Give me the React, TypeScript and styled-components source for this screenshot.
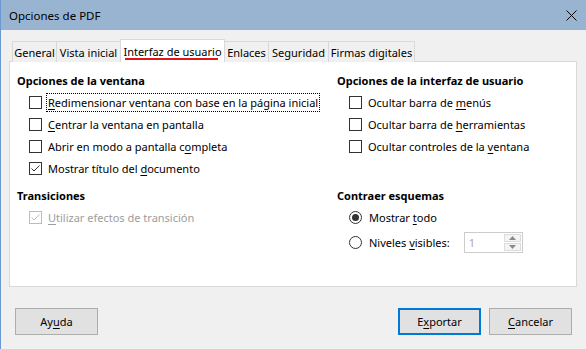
import React, { FC } from 'react';
import styled, { createGlobalStyle, css } from 'styled-components';

const GlobalStyle = createGlobalStyle`
  html, body {
    margin: 0;
    padding: 0;
    background: #f0f0f0;
  }
  body {
    font-family: 'Noto Sans', 'Open Sans', sans-serif;
    font-size: 11px;
    color: #000;
  }
`;

const Window = styled.div`
  width: 586px;
  height: 349px;
  box-sizing: border-box;
  border-left: 1px solid #6a98d2;
  background: #f0f0f0;
  display: flex;
  flex-direction: column;
`;

const TitleBar = styled.div`
  height: 30px;
  flex-shrink: 0;
  background: #99b4d1;
  display: flex;
  align-items: center;
  justify-content: space-between;
  padding: 0 9px 0 8px;
  font-size: 11.5px;
`;

const CloseIcon = styled.svg`
  width: 11px;
  height: 11px;
`;

const Body = styled.div`
  flex: 1;
  display: flex;
  flex-direction: column;
  padding: 9px 9px 0 8px;
`;

const TabStrip = styled.div`
  display: flex;
  align-items: flex-end;
  height: 23px;
  padding-left: 3px;
  margin-bottom: -1px;
  position: relative;
  z-index: 1;
`;

const Tab = styled.div<{ $w: number; $active?: boolean }>`
  width: ${p => p.$w}px;
  box-sizing: border-box;
  height: 21px;
  margin-right: -1px;
  border: 1px solid #d9d9d9;
  border-bottom: none;
  background: #f0f0f0;
  display: flex;
  align-items: center;
  justify-content: center;
  white-space: nowrap;
  position: relative;
  ${p =>
    p.$active &&
    css`
      height: 23px;
      background: #fff;
      z-index: 2;
      &::after {
        content: '';
        position: absolute;
        left: 4px;
        right: 6px;
        bottom: 2px;
        height: 2px;
        background: #e3141b;
      }
    `}
`;

const Panel = styled.div`
  height: 226px;
  box-sizing: border-box;
  border: 1px solid #d9d9d9;
  background: #fff;
  padding: 11px 0 0 7px;
`;

const Grid = styled.div`
  display: grid;
  grid-template-columns: 320px 1fr;
  row-gap: 9px;
`;

const Section = styled.div`
  display: flex;
  flex-direction: column;
`;

const Heading = styled.div`
  height: 16px;
  line-height: 16px;
  font-weight: bold;
  margin-bottom: 2px;
`;

const Row = styled.div<{ $gapTop?: number }>`
  height: 22px;
  display: flex;
  align-items: center;
  padding-left: 12px;
  margin-top: ${p => p.$gapTop || 0}px;
`;

const Box = styled.span<{ $disabled?: boolean }>`
  width: 13px;
  height: 13px;
  box-sizing: border-box;
  border: 1px solid ${p => (p.$disabled ? '#bcbcbc' : '#333')};
  background: #fff;
  flex-shrink: 0;
  display: flex;
  align-items: center;
  justify-content: center;
`;

const Round = styled.span<{ $on?: boolean }>`
  width: 13px;
  height: 13px;
  box-sizing: border-box;
  border: 1px solid #333;
  border-radius: 50%;
  background: #fff;
  flex-shrink: 0;
  display: flex;
  align-items: center;
  justify-content: center;

  &::after {
    content: '';
    width: 7px;
    height: 7px;
    border-radius: 50%;
    background: ${p => (p.$on ? '#333' : 'transparent')};
  }
`;

const Label = styled.span<{ $disabled?: boolean; $focus?: boolean; $gap?: number }>`
  margin-left: ${p => p.$gap ?? 6}px;
  line-height: 15px;
  white-space: nowrap;
  color: ${p => (p.$disabled ? '#9d9d9d' : '#000')};
  ${p =>
    p.$focus &&
    css`
      outline: 1px dotted #000;
      outline-offset: 1px;
    `}
`;

const U = styled.span`
  text-decoration: underline;
  text-underline-offset: 2px;
`;

const Spin = styled.div`
  margin-left: 14px;
  width: 59px;
  height: 21px;
  box-sizing: border-box;
  border: 1px solid #cccccc;
  background: #fff;
  display: flex;
`;

const SpinValue = styled.span`
  flex: 1;
  padding-left: 4px;
  line-height: 19px;
  color: #a8a8a8;
`;

const SpinButtons = styled.div`
  width: 17px;
  display: flex;
  flex-direction: column;
  padding: 1px 1px 1px 0;
  gap: 1px;
`;

const SpinButton = styled.div`
  flex: 1;
  border: 1px solid #dcdcdc;
  background: #f4f4f4;
  display: flex;
  align-items: center;
  justify-content: center;
`;

const Footer = styled.div`
  display: flex;
  align-items: center;
  padding: 21px 5px 0 6px;
`;

const Button = styled.div<{ $primary?: boolean }>`
  width: 83px;
  height: 27px;
  box-sizing: border-box;
  border: ${p => (p.$primary ? '2px solid #0078d7' : '1px solid #adadad')};
  background: #e1e1e1;
  display: flex;
  align-items: center;
  justify-content: center;
`;

const Spacer = styled.div`
  flex: 1;
`;

const ButtonGap = styled.div`
  width: 8px;
`;

const Check: FC<{ checked?: boolean; disabled?: boolean }> = ({ checked, disabled }) => (
  <Box $disabled={disabled}>
    {checked && (
      <svg width="11" height="11" viewBox="0 0 11 11">
        <polyline
          points="1.5,5.5 4,8 9.5,2.5"
          fill="none"
          stroke={disabled ? '#bcbcbc' : '#333'}
          strokeWidth="1"
        />
      </svg>
    )}
  </Box>
);

const tabs = [
  { label: 'General', w: 45 },
  { label: 'Vista inicial', w: 65 },
  { label: 'Interfaz de usuario', w: 105, active: true },
  { label: 'Enlaces', w: 45 },
  { label: 'Seguridad', w: 61 },
  { label: 'Firmas digitales', w: 87 },
];

const App: FC = () => (
  <>
    <GlobalStyle />
    <Window>
      <TitleBar>
        <span>Opciones de PDF</span>
        <CloseIcon viewBox="0 0 11 11">
          <path d="M0.5 0.5 L10.5 10.5 M10.5 0.5 L0.5 10.5" stroke="#000" strokeWidth="1" />
        </CloseIcon>
      </TitleBar>
      <Body>
        <TabStrip>
          {tabs.map(t => (
            <Tab key={t.label} $w={t.w} $active={t.active}>
              {t.label}
            </Tab>
          ))}
        </TabStrip>
        <Panel>
          <Grid>
            <Section>
              <Heading>Opciones de la ventana</Heading>
              <Row>
                <Check />
                <Label $focus>
                  <U>R</U>edimensionar ventana con base en la página inicial
                </Label>
              </Row>
              <Row>
                <Check />
                <Label>
                  <U>C</U>entrar la ventana en pantalla
                </Label>
              </Row>
              <Row>
                <Check />
                <Label>
                  Abrir en modo a pantalla c<U>o</U>mpleta
                </Label>
              </Row>
              <Row>
                <Check checked />
                <Label>
                  Mostrar título del <U>d</U>ocumento
                </Label>
              </Row>
            </Section>
            <Section>
              <Heading>Opciones de la interfaz de usuario</Heading>
              <Row>
                <Check />
                <Label>
                  Ocultar barra de <U>m</U>enús
                </Label>
              </Row>
              <Row>
                <Check />
                <Label>
                  Ocultar barra de <U>h</U>erramientas
                </Label>
              </Row>
              <Row>
                <Check />
                <Label>
                  Ocultar controles de la <U>v</U>entana
                </Label>
              </Row>
            </Section>
            <Section>
              <Heading>Transiciones</Heading>
              <Row>
                <Check checked disabled />
                <Label $disabled>
                  <U>U</U>tilizar efectos de transición
                </Label>
              </Row>
            </Section>
            <Section>
              <Heading>Contraer esquemas</Heading>
              <Row>
                <Round $on />
                <Label $gap={7}>
                  Mostrar <U>t</U>odo
                </Label>
              </Row>
              <Row $gapTop={3}>
                <Round />
                <Label $gap={7}>
                  Niveles <U>v</U>isibles:
                </Label>
                <Spin>
                  <SpinValue>1</SpinValue>
                  <SpinButtons>
                    <SpinButton>
                      <svg width="7" height="4" viewBox="0 0 7 4">
                        <polygon points="0,4 7,4 3.5,0" fill="#8a8a8a" />
                      </svg>
                    </SpinButton>
                    <SpinButton>
                      <svg width="7" height="4" viewBox="0 0 7 4">
                        <polygon points="0,0 7,0 3.5,4" fill="#8a8a8a" />
                      </svg>
                    </SpinButton>
                  </SpinButtons>
                </Spin>
              </Row>
            </Section>
          </Grid>
        </Panel>
        <Footer>
          <Button>
            <span>
              Ay<U>u</U>da
            </span>
          </Button>
          <Spacer />
          <Button $primary>
            <span>
              E<U>x</U>portar
            </span>
          </Button>
          <ButtonGap />
          <Button>
            <span>
              <U>C</U>ancelar
            </span>
          </Button>
        </Footer>
      </Body>
    </Window>
  </>
);

export default App;
